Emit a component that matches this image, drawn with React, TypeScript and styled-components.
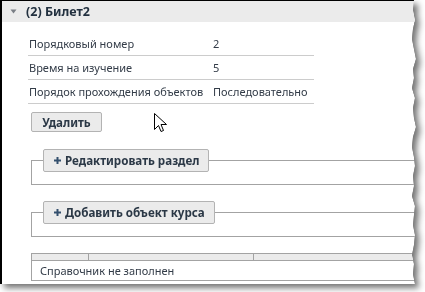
import React from "react";
import styled, { createGlobalStyle } from "styled-components";

const GlobalStyle = createGlobalStyle`
  html, body {
    margin: 0;
    padding: 0;
    background: #ffffff;
  }
  body {
    width: 425px;
    height: 292px;
    overflow: hidden;
    font-family: "Noto Sans", Tahoma, sans-serif;
  }
`;

// jagged right edge of the torn screenshot
const tear = (() => {
  const xs = [414, 413, 415, 413, 412, 414, 416, 413, 414, 412, 415, 413, 414, 416, 413, 412, 414, 415, 413, 414, 412, 415, 414, 413, 415, 414, 412, 414, 413, 415];
  const step = 284 / (xs.length - 1);
  const pts = ["0px 0px"];
  xs.forEach((x, i) => pts.push(`${x}px ${Math.round(i * step)}px`));
  pts.push("0px 284px");
  return `polygon(${pts.join(", ")})`;
})();

const Shadow = styled.div`
  width: 425px;
  height: 292px;
  filter: drop-shadow(0 0 0.6px #000) drop-shadow(4px 4px 3px rgba(0, 0, 0, 0.55));
`;

const Sheet = styled.div`
  position: relative;
  width: 417px;
  height: 284px;
  box-sizing: border-box;
  overflow: hidden;
  background: #ffffff;
  border-left: 2px solid #000;
  border-top: 1px solid #000;
  clip-path: ${tear};
  color: #333c48;
  font-size: 11px;
  white-space: nowrap;
`;

const Header = styled.div`
  display: flex;
  align-items: center;
  height: 21px;
  background: #ebebeb;
  padding-left: 8px;
  gap: 9px;
  font-weight: bold;
  font-size: 12.5px;
  color: #22303f;
`;

const Body = styled.div`
  position: relative;
  padding: 10px 0 0 29px;
`;

const Props = styled.div`
  width: 286px;
  margin-left: -3px;
`;

const PropRow = styled.div`
  display: grid;
  grid-template-columns: 184px 1fr;
  align-items: center;
  height: 23px;
  border-bottom: 1px solid #cccccc;
  padding-left: 1px;
`;

const Button = styled.button`
  display: inline-flex;
  align-items: center;
  gap: 4px;
  height: ${({ $h }: { $h?: number }) => $h ?? 20}px;
  box-sizing: border-box;
  padding: 0 ${({ $h }: { $h?: number }) => ($h ? 9 : 12)}px 0 10px;
  background: #ebebeb;
  border: 1px solid #b3b3b3;
  border-radius: 2px;
  font-family: inherit;
  font-weight: bold;
  font-size: 11.6px;
  color: #2b3846;
`;

const DeleteButton = styled(Button)`
  margin-top: 8px;
  width: 71px;
  justify-content: center;
  padding: 0;
`;

const Fieldset = styled.fieldset`
  margin: ${({ $top }: { $top: number }) => $top}px 0 0 0;
  padding: 0 0 12px 11px;
  width: 400px;
  border: none;
  border-top: 1px solid #a3a3a3;
  border-left: 1px solid #a3a3a3;
  border-bottom: 1px solid #a3a3a3;
  min-width: 0;
`;

const Legend = styled.legend`
  padding: 0;
`;

const Grid = styled.div`
  margin-top: 16px;
  width: 400px;
  border: 1px solid #a3a3a3;
  border-right: none;
`;

const GridHead = styled.div`
  display: grid;
  grid-template-columns: 56px 165px 1fr;
  height: 6px;
  background: #ebebeb;
  border-bottom: 1px solid #a3a3a3;
  div + div {
    border-left: 1px solid #a3a3a3;
  }
`;

const GridEmpty = styled.div`
  height: 19px;
  display: flex;
  align-items: center;
  padding-left: 8px;
`;

const Cursor = styled.svg`
  position: absolute;
  left: 152px;
  top: 91px;
`;

const Caret = () => (
  <svg width="7" height="5" viewBox="0 0 7 5">
    <path d="M0.5 0.5 L6.5 0.5 L3.5 4.5 Z" fill="#7a7f86" />
  </svg>
);

const Plus = () => (
  <svg width="7" height="7" viewBox="0 0 7 7">
    <path d="M2.5 0 H4.5 V2.5 H7 V4.5 H4.5 V7 H2.5 V4.5 H0 V2.5 H2.5 Z" fill="#34506e" />
  </svg>
);

const props = [
  ["Порядковый номер", "2"],
  ["Время на изучение", "5"],
  ["Порядок прохождения объектов", "Последовательно"],
];

export default function App() {
  return (
    <>
      <GlobalStyle />
      <Shadow>
        <Sheet>
          <Header>
            <Caret />
            <span>(2) Билет2</span>
          </Header>
          <Body>
            <Props>
              {props.map(([k, v]) => (
                <PropRow key={k}>
                  <span>{k}</span>
                  <span>{v}</span>
                </PropRow>
              ))}
            </Props>
            <DeleteButton>Удалить</DeleteButton>
            <Fieldset $top={17}>
              <Legend>
                <Button $h={23}>
                  <Plus />
                  Редактировать раздел
                </Button>
              </Legend>
            </Fieldset>
            <Fieldset $top={16}>
              <Legend>
                <Button $h={23}>
                  <Plus />
                  Добавить объект курса
                </Button>
              </Legend>
            </Fieldset>
            <Grid>
              <GridHead>
                <div />
                <div />
                <div />
              </GridHead>
              <GridEmpty>Справочник не заполнен</GridEmpty>
            </Grid>
            <Cursor width="13" height="20" viewBox="0 0 13 20">
              <path d="M0.5 0.5 V16.5 L4.5 12.5 L7 18.5 L9.5 17.5 L7 11.5 H12.5 Z" fill="#fff" stroke="#000" strokeWidth="1" />
            </Cursor>
          </Body>
        </Sheet>
      </Shadow>
    </>
  );
}
